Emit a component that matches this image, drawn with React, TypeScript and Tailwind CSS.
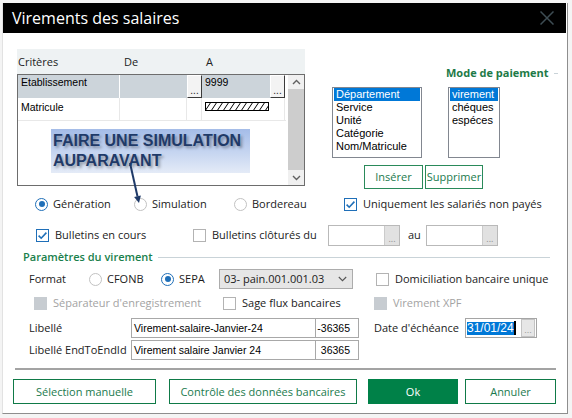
import React from 'react';

type CheckState = 'on' | 'off' | 'dis';

const Check = ({ state, label }: { state: CheckState; label: string }) => (
  <div className="flex items-center gap-[6px] whitespace-nowrap">
    {state === 'on' && (
      <span className="w-[13px] h-[13px] border border-[#1f6fb8] bg-white flex items-center justify-center">
        <svg width="11" height="11" viewBox="0 0 11 11">
          <path d="M1.6 5.6 L4.2 8.2 L9.4 2.6" fill="none" stroke="#1f6fb8" strokeWidth="1.6" />
        </svg>
      </span>
    )}
    {state === 'off' && <span className="w-[13px] h-[13px] border border-[#b3b3b3] bg-white" />}
    {state === 'dis' && <span className="w-[13px] h-[13px] bg-[#c7ccd1]" />}
    <span className={state === 'dis' ? 'text-[#a3a3a3]' : 'text-[#1b1b1b]'}>{label}</span>
  </div>
);

const Radio = ({ on = false, label }: { on?: boolean; label: string }) => (
  <div className="flex items-center gap-[5px] whitespace-nowrap">
    {on ? (
      <span className="w-[13px] h-[13px] rounded-full border border-[#1f6fb8] bg-white flex items-center justify-center">
        <span className="w-[6px] h-[6px] rounded-full bg-[#1f6fb8]" />
      </span>
    ) : (
      <span className="w-[13px] h-[13px] rounded-full border border-[#c2c2c2] bg-white" />
    )}
    <span>{label}</span>
  </div>
);

const DotsBtn = () => (
  <div className="w-[15px] h-[23px] bg-[#f3f3f3] border-t border-l border-t-white border-l-white border-r border-b border-r-[#3a3a3a] border-b-[#3a3a3a] flex items-end justify-center text-[10px] leading-[12px] text-[#222]">
    ...
  </div>
);

const PickBox = () => (
  <div className="w-[72px] h-[21px] border border-[#b9b9b9] bg-white flex justify-end">
    <div className="w-[15px] h-full bg-[#e1e1e1] border-l border-[#cbcbcb] flex items-end justify-center text-[9px] leading-[12px] text-[#8e8e8e]">
      ...
    </div>
  </div>
);

const Chevron = ({ up }: { up?: boolean }) => (
  <svg width="9" height="6" viewBox="0 0 9 6">
    <path d={up ? 'M1 5 L4.5 1.5 L8 5' : 'M1 1 L4.5 4.5 L8 1'} fill="none" stroke="#606060" strokeWidth="1.4" />
  </svg>
);

const CriteriaTable = () => (
  <div className="w-[288px] flex flex-col">
    <div className="h-[25px] bg-[#eef2f3] flex items-center text-[11px] text-[#222]">
      <span className="w-[107px] pl-[1px]">Critères</span>
      <span className="w-[82px]">De</span>
      <span>A</span>
    </div>
    <div className="h-[112px] border border-[#6d6d6d] flex [font-family:'Liberation_Sans',Arial,sans-serif] text-[10.5px] leading-[13px] text-black">
      <div className="w-[270px] flex flex-col">
        <div className="h-[23px] flex">
          <div className="w-[102px] bg-[#ccd4da] border-r border-white pl-[3px] pt-[1px]">Etablissement</div>
          <div className="w-[67px] bg-[#ccd4da]" />
          <DotsBtn />
          <div className="w-[68px] bg-[#ccd4da] pl-[3px] pt-[1px]">9999</div>
          <DotsBtn />
        </div>
        <div className="h-[23px] flex border-b border-[#e8e8e8]">
          <div className="w-[102px] border-r border-[#e8e8e8] pl-[3px] pt-[3px]">Matricule</div>
          <div className="w-[67px] border-r border-[#e8e8e8]" />
          <div className="w-[15px] border-r border-[#e8e8e8]" />
          <div className="w-[68px] pl-[3px] pt-[4px]">
            <svg width="64" height="9" viewBox="0 0 64 9">
              <defs>
                <pattern id="hatch" width="6" height="9" patternUnits="userSpaceOnUse">
                  <path d="M0 9 L6 0 M-6 9 L0 0 M6 9 L12 0" stroke="#000" strokeWidth="1" />
                </pattern>
              </defs>
              <rect x="0.5" y="0.5" width="63" height="8" fill="url(#hatch)" stroke="#000" strokeWidth="1" />
            </svg>
          </div>
          <div className="w-[15px] border-r border-[#e8e8e8]" />
        </div>
      </div>
      <div className="w-[16px] ml-[2px] flex flex-col bg-[#f0f0f0]">
        <div className="h-[14px] flex items-center justify-center">
          <Chevron up />
        </div>
        <div className="flex-1 bg-[#cdcdcd]" />
        <div className="h-[15px] flex items-center justify-center">
          <Chevron />
        </div>
      </div>
    </div>
  </div>
);

const ListBox = ({ items, w }: { items: string[]; w: string }) => (
  <div className={`${w} h-[71px] border border-[#828790] bg-white px-[1px] [font-family:'Liberation_Sans',Arial,sans-serif] text-[11px] leading-[13px]`}>
    {items.map((it, i) => (
      <div key={it} className={i === 0 ? 'h-[13px] pl-[2px] bg-[#0078d7] text-white' : 'h-[13px] pl-[2px] text-black'}>
        {it}
      </div>
    ))}
  </div>
);

export default function App() {
  return (
    <div className="w-[572px] h-[418px] bg-[#f4f4f4] pt-[3px] pl-[2px] [font-family:'Open_Sans',sans-serif] text-[11px] leading-[14px] text-[#1b1b1b] overflow-hidden">
      <div className="relative w-[566px] h-[411px] bg-white border-l border-l-[#e2e2e2] border-r border-r-[#8e8e8e] border-b border-b-[#8e8e8e] flex flex-col">
        {/* title bar */}
        <div className="h-[30px] mr-[1px] bg-black flex items-center justify-between pl-[9px] pr-[12px]">
          <span className="text-white text-[16px] leading-[20px]">Virements des salaires</span>
          <svg width="14" height="14" viewBox="0 0 14 14">
            <path d="M0.5 0.5 L13.5 13.5 M13.5 0.5 L0.5 13.5" stroke="#3e4d54" strokeWidth="1.5" />
          </svg>
        </div>

        {/* criteria + lists */}
        <div className="relative flex pt-[16px] pl-[14px] h-[163px]">
          <CriteriaTable />
          <div className="ml-[27px] flex flex-col">
            <div className="mt-[17px] pl-[114px] flex items-center h-[14px]">
              <span className="font-bold text-[#1d7a47] whitespace-nowrap">Mode de paiement</span>
              <span className="ml-[5px] w-[4px] h-px bg-[#c9d3d8]" />
            </div>
            <div className="mt-[7px] flex gap-[26px]">
              <ListBox w="w-[90px]" items={['Département', 'Service', 'Unité', 'Catégorie', 'Nom/Matricule']} />
              <ListBox w="w-[52px]" items={['virement', 'chéques', 'espéces']} />
            </div>
            <div className="mt-[7px] ml-[32px] flex gap-[2px]">
              <button className="w-[59px] h-[24px] border border-[#2a8a5a] bg-white text-[#1a7a4e] text-[11px]">Insérer</button>
              <button className="w-[58px] h-[24px] border border-[#2a8a5a] bg-white text-[#1a7a4e] text-[11px] whitespace-nowrap flex items-center justify-center">Supprimer</button>
            </div>
          </div>

          <div className="absolute left-[48px] top-[96px] w-[199px] h-[44px] bg-gradient-to-b from-[#a4bce8] to-[#e4ebf7] pl-[2px] pt-[2px] [font-family:'Liberation_Sans',Arial,sans-serif] font-bold text-[16px] leading-[20px] text-[#1f3a68] [text-shadow:2px_2px_3px_rgba(0,0,0,0.35)] whitespace-nowrap">
            <div>FAIRE UNE SIMULATION</div>
            <div>AUPARAVANT</div>
          </div>
          <svg className="absolute left-[120px] top-[125px] z-10" width="25" height="50" viewBox="0 0 25 50">
            <line x1="7" y1="5" x2="14.5" y2="38.5" stroke="#1f3a68" strokeWidth="2" />
            <polygon points="16,45 17.9,37.4 11.1,38.9" fill="#1f3a68" />
          </svg>
        </div>

        {/* radios */}
        <div className="flex items-center h-[16px] pl-[32px]">
          <div className="w-[99px]"><Radio on label="Génération" /></div>
          <div className="w-[100px]"><Radio label="Simulation" /></div>
          <div className="w-[110px]"><Radio label="Bordereau" /></div>
          <Check state="on" label="Uniquement les salariés non payés" />
        </div>

        {/* bulletins */}
        <div className="flex items-center h-[22px] mt-[12px] pl-[33px]">
          <div className="w-[157px]"><Check state="on" label="Bulletins en cours" /></div>
          <div className="w-[135px]"><Check state="off" label="Bulletins clôturés du" /></div>
          <PickBox />
          <span className="ml-[8px]">au</span>
          <div className="ml-[5px]"><PickBox /></div>
        </div>

        {/* section header */}
        <div className="flex items-center h-[14px] mt-[4px] pl-[20px] pr-[17px]">
          <span className="font-semibold text-[#1a7f4c] whitespace-nowrap">Paramètres du virement</span>
          <span className="ml-[5px] flex-1 h-px bg-[#c9d3d8]" />
        </div>

        {/* format */}
        <div className="flex items-center h-[20px] mt-[5px] pl-[26px]">
          <span className="w-[60px] font-medium text-[#222]">Format</span>
          <div className="w-[72px]"><Radio label="CFONB" /></div>
          <div className="w-[58px]"><Radio on label="SEPA" /></div>
          <div className="w-[134px] h-[20px] bg-[#e6e6e6] border border-[#acacac] flex items-center justify-between pl-[4px] pr-[5px] whitespace-nowrap">
            <span>03- pain.001.001.03</span>
            <svg width="9" height="6" viewBox="0 0 9 6">
              <path d="M0.8 1 L4.5 4.7 L8.2 1" fill="none" stroke="#555" strokeWidth="1.1" />
            </svg>
          </div>
          <div className="ml-[23px]"><Check state="off" label="Domiciliation bancaire unique" /></div>
        </div>

        {/* options */}
        <div className="flex items-center h-[16px] mt-[6px] pl-[31px]">
          <div className="w-[189px]"><Check state="dis" label="Séparateur d'enregistrement" /></div>
          <div className="w-[151px]"><Check state="off" label="Sage flux bancaires" /></div>
          <Check state="dis" label="Virement XPF" />
        </div>

        {/* libellé */}
        <div className="flex items-center h-[20px] mt-[7px] pl-[26px]">
          <span className="w-[102px] font-medium text-[#222] whitespace-nowrap">Libellé</span>
          <div className="w-[228px] h-[20px] border border-[#a8a8a8] flex [font-family:'Liberation_Sans',Arial,sans-serif] text-[10.5px] leading-[18px] text-black">
            <span className="w-[184px] border-r border-[#a8a8a8] pl-[2px] whitespace-nowrap">Virement-salaire-Janvier-24</span>
            <span className="flex-1 text-right pr-[8px]">-36365</span>
          </div>
          <span className="ml-[15px] w-[91px] whitespace-nowrap">Date d'échéance</span>
          <div className="w-[72px] h-[20px] border border-[#a5a5a5] bg-white flex items-center pl-[1px] pr-[1px] [font-family:'Liberation_Sans',Arial,sans-serif] text-[12px] leading-[13px]">
            <span className="bg-[#0078d7] text-white">31/01/24</span>
            <span className="w-[2px] h-[14px] bg-black" />
            <span className="ml-auto w-[14px] h-[18px] bg-[#e6e6e6] border border-[#c3c3c3] flex items-end justify-center text-[9px] leading-[11px] text-[#9a9a9a]">...</span>
          </div>
        </div>

        {/* endtoend */}
        <div className="flex items-center h-[20px] mt-[2px] pl-[26px]">
          <span className="w-[102px] font-medium text-[#222] whitespace-nowrap">Libellé EndToEndId</span>
          <div className="w-[228px] h-[20px] border border-[#a8a8a8] flex [font-family:'Liberation_Sans',Arial,sans-serif] text-[10.5px] leading-[18px] text-black">
            <span className="w-[184px] border-r border-[#a8a8a8] pl-[2px] whitespace-nowrap">Virement salaire Janvier 24</span>
            <span className="flex-1 text-right pr-[8px]">36365</span>
          </div>
        </div>

        <div className="mt-[8px] ml-[12px] w-[541px] h-[2px] bg-[#a3a3a3]" />

        {/* buttons */}
        <div className="flex mt-[9px] pl-[10px] h-[25px] text-[11px]">
          <button className="w-[143px] h-full border border-[#0f7a47] bg-white text-[#1a7a4e]">Sélection manuelle</button>
          <button className="ml-[13px] w-[188px] h-full border border-[#0f7a47] bg-white text-[#1a7a4e] whitespace-nowrap">Contrôle des données bancaires</button>
          <button className="ml-[11px] w-[90px] h-full bg-[#008148] text-white">Ok</button>
          <button className="ml-[7px] w-[91px] h-full border border-[#0f7a47] bg-white text-[#1a7a4e]">Annuler</button>
        </div>
      </div>
    </div>
  );
}
